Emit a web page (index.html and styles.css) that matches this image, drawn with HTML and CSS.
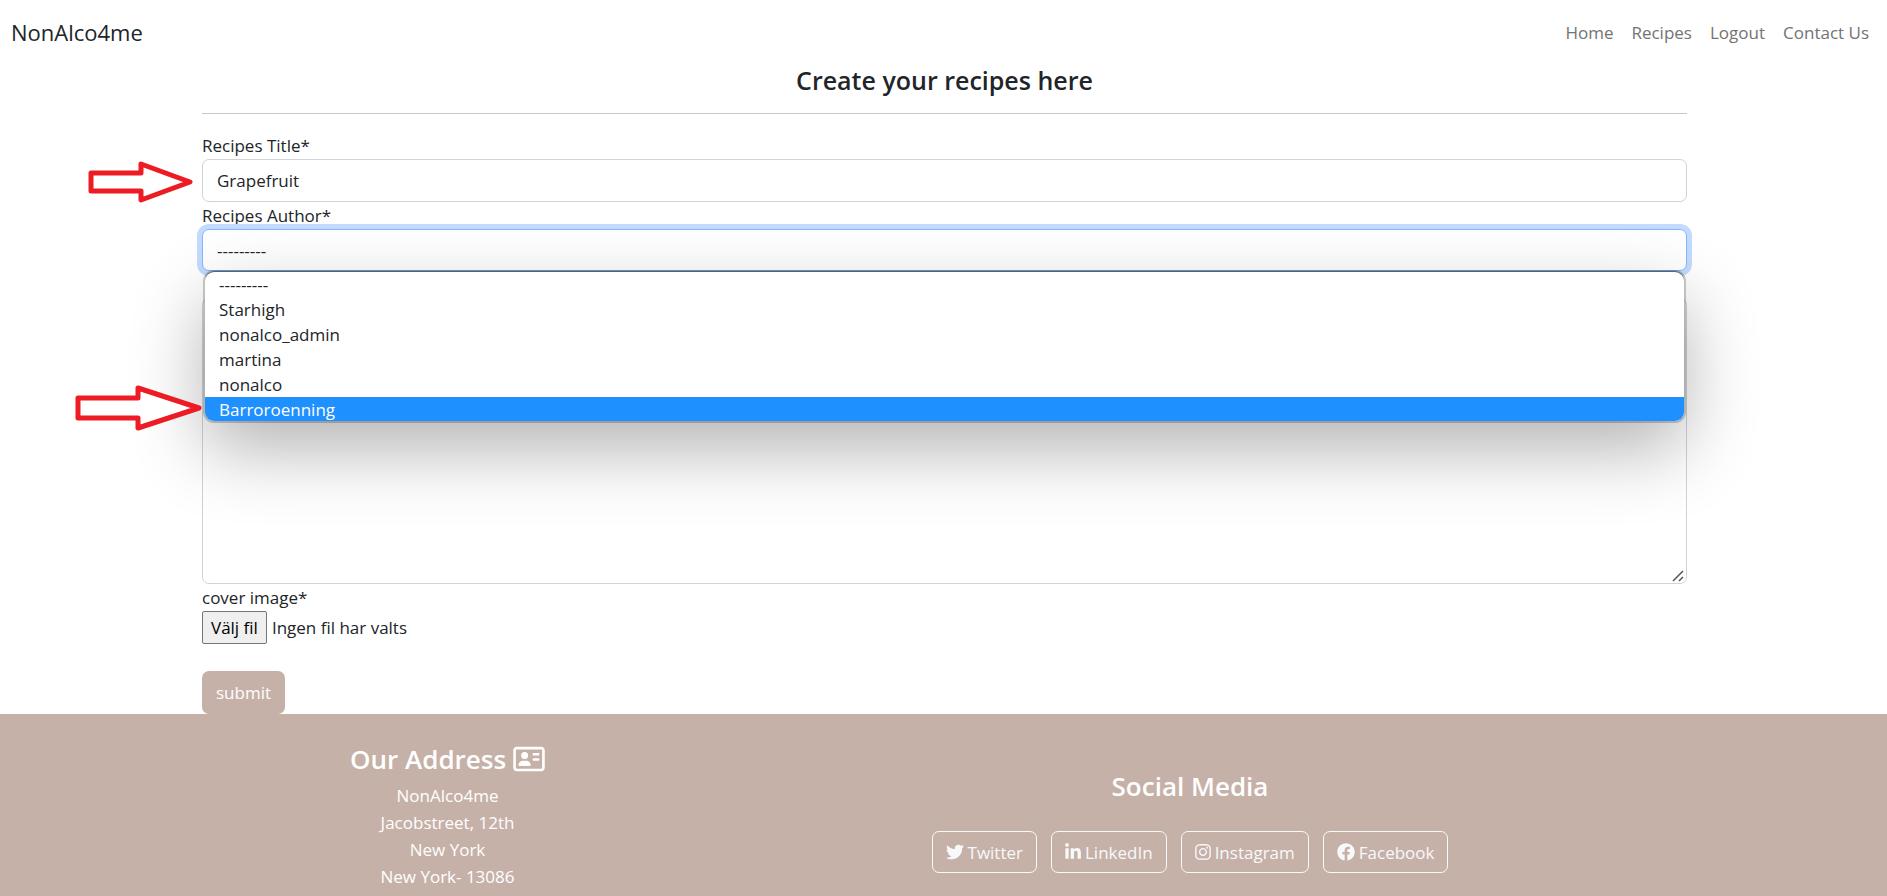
FILE: index.html
```html
<!DOCTYPE html>
<html lang="en">
<head>
<meta charset="utf-8">
<title>NonAlco4me</title>
<link rel="stylesheet" href="styles.css">
</head>
<body>
<header class="navbar">
  <a class="brand" href="#">NonAlco4me</a>
  <nav class="nav">
    <a href="#">Home</a>
    <a href="#">Recipes</a>
    <a href="#">Logout</a>
    <a href="#">Contact Us</a>
  </nav>
</header>
<main class="container">
  <h1 class="page-title">Create your recipes here</h1>
  <hr class="rule">
  <form class="form">
    <label for="title">Recipes Title*</label>
    <div class="field">
      <input class="control" id="title" type="text" value="Grapefruit">
      <svg class="arrow arrow-title" width="108" height="44" viewBox="0 0 108 44" aria-hidden="true"><path d="M3 13H53V4L102 22L53 40V31H3Z"/></svg>
    </div>
    <label for="author">Recipes Author*</label>
    <div class="field">
      <select class="control control-focus" id="author">
        <option>---------</option>
        <option>Starhigh</option>
        <option>nonalco_admin</option>
        <option>martina</option>
        <option>nonalco</option>
        <option>Barroroenning</option>
      </select>
      <ul class="menu" role="listbox" aria-label="Recipes Author">
        <li role="option">---------</li>
        <li role="option">Starhigh</li>
        <li role="option">nonalco_admin</li>
        <li role="option">martina</li>
        <li role="option">nonalco</li>
        <li role="option" class="active" aria-selected="true">Barroroenning</li>
      </ul>
      <svg class="arrow arrow-option" width="128" height="48" viewBox="0 0 128 48" aria-hidden="true"><path d="M3 14H63V4L124 24L63 44V34H3Z"/></svg>
    </div>
    <div class="field area-field">
      <textarea class="control area" aria-label="Recipe"></textarea>
      <svg class="grip" width="12" height="12" viewBox="0 0 12 12" aria-hidden="true"><path d="M1 11L11 1M7 11L11 7"/></svg>
    </div>
    <label for="cover">cover image*</label>
    <div class="file">
      <span class="file-button">Välj fil</span>
      <span>Ingen fil har valts</span>
      <input class="file-input" id="cover" type="file">
    </div>
    <button class="submit" type="submit">submit</button>
  </form>
</main>
<footer class="footer">
  <section class="address">
    <h2>Our Address
      <svg class="card-icon" viewBox="0 0 576 512" aria-hidden="true"><path d="M512 80c8.800 0 16 7.200 16 16V416c0 8.800-7.200 16-16 16H64c-8.800 0-16-7.200-16-16V96c0-8.800 7.200-16 16-16H512zM64 32C28.700 32 0 60.700 0 96V416c0 35.300 28.700 64 64 64H512c35.300 0 64-28.700 64-64V96c0-35.300-28.700-64-64-64H64zM208 256a64 64 0 1 0 0-128 64 64 0 1 0 0 128zm-32 32c-44.200 0-80 35.800-80 80c0 8.800 7.200 16 16 16H304c8.800 0 16-7.200 16-16c0-44.200-35.800-80-80-80H176zM376 144c-13.300 0-24 10.700-24 24s10.700 24 24 24h80c13.300 0 24-10.700 24-24s-10.700-24-24-24H376zm0 96c-13.300 0-24 10.700-24 24s10.700 24 24 24h80c13.300 0 24-10.700 24-24s-10.700-24-24-24H376z"/></svg>
    </h2>
    <address>NonAlco4me<br>Jacobstreet, 12th<br>New York<br>New York- 13086</address>
  </section>
  <section class="social">
    <h2>Social Media</h2>
    <div class="links">
      <a href="#"><svg viewBox="0 0 512 512" aria-hidden="true"><path d="M459.370 151.716c.325 4.548.325 9.097.325 13.645 0 138.720-105.583 298.558-298.558 298.558-59.452 0-114.680-17.219-161.137-47.106 8.447.974 16.568 1.299 25.340 1.299 49.055 0 94.213-16.568 130.274-44.832-46.132-.975-84.792-31.188-98.112-72.772 6.498.974 12.995 1.624 19.818 1.624 9.421 0 18.843-1.300 27.614-3.573-48.081-9.747-84.143-51.980-84.143-102.985v-1.299c13.969 7.797 30.214 12.670 47.431 13.319-28.264-18.843-46.781-51.005-46.781-87.391 0-19.492 5.197-37.360 14.294-52.954 51.655 63.675 129.300 105.258 216.365 109.807-1.624-7.797-2.599-15.918-2.599-24.040 0-57.828 46.782-104.934 104.934-104.934 30.213 0 57.502 12.670 76.670 33.137 23.715-4.548 46.456-13.320 66.599-25.340-7.798 24.366-24.366 44.833-46.132 57.827 21.117-2.273 41.584-8.122 60.426-16.243-14.292 20.791-32.161 39.308-52.628 54.253z"/></svg><span>Twitter</span></a>
      <a href="#"><svg class="narrow" viewBox="0 0 448 512" aria-hidden="true"><path d="M100.280 448H7.400V148.900h92.880zM53.790 108.100C24.090 108.100 0 83.500 0 53.800a53.790 53.790 0 0 1 107.580 0c0 29.700-24.100 54.300-53.790 54.300zM447.900 448h-92.680V302.400c0-34.700-.7-79.200-48.290-79.200-48.290 0-55.690 37.700-55.690 76.700V448h-92.780V148.900h89.080v40.800h1.300c12.400-23.500 42.690-48.300 87.880-48.300 94 0 111.280 61.900 111.280 142.300V448z"/></svg><span>LinkedIn</span></a>
      <a href="#"><svg class="narrow" viewBox="0 0 448 512" aria-hidden="true"><path d="M224.100 141c-63.600 0-114.900 51.300-114.900 114.900s51.300 114.900 114.900 114.900S339 319.500 339 255.900 287.700 141 224.100 141zm0 189.600c-41.100 0-74.700-33.500-74.700-74.700s33.500-74.700 74.700-74.700 74.700 33.500 74.700 74.700-33.600 74.700-74.700 74.700zm146.400-194.300c0 14.900-12 26.800-26.800 26.800-14.900 0-26.800-12-26.800-26.800s12-26.800 26.800-26.800 26.800 12 26.800 26.800zm76.100 27.200c-1.700-35.900-9.900-67.700-36.200-93.900-26.200-26.200-58-34.400-93.900-36.200-37-2.100-147.900-2.100-184.900 0-35.800 1.700-67.600 9.900-93.900 36.100s-34.400 58-36.200 93.900c-2.100 37-2.100 147.900 0 184.900 1.700 35.900 9.900 67.700 36.200 93.900s58 34.400 93.900 36.200c37 2.100 147.900 2.100 184.900 0 35.900-1.700 67.700-9.900 93.900-36.200 26.200-26.200 34.400-58 36.200-93.900 2.100-37 2.100-147.800 0-184.800zM398.800 388c-7.800 19.600-22.900 34.700-42.600 42.600-29.500 11.700-99.500 9-132.100 9s-102.700 2.600-132.100-9c-19.600-7.800-34.700-22.900-42.600-42.600-11.700-29.500-9-99.500-9-132.100s-2.600-102.700 9-132.100c7.800-19.600 22.900-34.700 42.600-42.600 29.500-11.700 99.500-9 132.100-9s102.700-2.600 132.100 9c19.600 7.800 34.700 22.900 42.600 42.600 11.700 29.500 9 99.500 9 132.100s2.700 102.700-9 132.100z"/></svg><span>Instagram</span></a>
      <a href="#"><svg viewBox="0 0 512 512" aria-hidden="true"><path d="M504 256C504 119 393 8 256 8S8 119 8 256c0 123.780 90.690 226.380 209.250 245V327.690h-63V256h63v-54.640c0-62.150 37-96.480 93.670-96.480 27.140 0 55.520 4.840 55.520 4.840v61h-31.280c-30.800 0-40.410 19.120-40.410 38.730V256h68.780l-11 71.690h-57.780V501C413.310 482.380 504 379.780 504 256z"/></svg><span>Facebook</span></a>
    </div>
  </section>
</footer>
</body>
</html>
```
FILE: styles.css
```css
* {
  box-sizing: border-box;
}

body {
  margin: 0;
  min-height: 100vh;
  display: flex;
  flex-direction: column;
  overflow: hidden;
  font-family: "Open Sans", "Noto Sans", sans-serif;
  font-size: 17px;
  line-height: 27px;
  color: #212529;
  background: #fff;
}

a {
  color: inherit;
  text-decoration: none;
}

.navbar {
  display: flex;
  justify-content: space-between;
  align-items: center;
  height: 64px;
  padding: 0 18px 0 11px;
}

.brand {
  font-size: 22px;
}

.nav {
  display: flex;
  gap: 18px;
  color: #737373;
}

.container {
  padding: 0 200px 0 202px;
}

.page-title {
  margin: 0;
  font-size: 25px;
  line-height: 32px;
  font-weight: 600;
  text-align: center;
}

.rule {
  margin: 17px 0 18px;
  border: 0;
  border-top: 1px solid #c7c8c9;
}

.form {
  display: flex;
  flex-direction: column;
}

.field {
  position: relative;
  display: flex;
}

.control {
  width: 100%;
  height: 43px;
  padding: 7px 14px;
  border: 1px solid #ced4da;
  border-radius: 7px;
  background: #fff;
  font: inherit;
  color: inherit;
  appearance: none;
}

.control-focus {
  height: 42px;
  border-color: #86b7fe;
  outline: 0;
  box-shadow: 0 0 0 5px #c2dbfe;
}

.area-field {
  margin-top: 27px;
}

.area {
  height: 286px;
  resize: none;
}

.grip {
  position: absolute;
  right: 3px;
  bottom: 2px;
  fill: none;
  stroke: #555;
  stroke-width: 1.5;
}

.menu {
  position: absolute;
  z-index: 1;
  top: 43px;
  left: 3px;
  right: 3px;
  max-height: 149px;
  margin: 0;
  padding: 0;
  overflow: hidden;
  list-style: none;
  line-height: 25px;
  background: #fff;
  border-radius: 9px;
  box-shadow: 0 0 0 2px rgba(0, 0, 0, 0.2), 0 -1px 0 rgba(0, 0, 0, 0.4), 0 28px 72px rgba(0, 0, 0, 0.3);
}

.menu li {
  padding: 0 14px;
}

.menu .active {
  color: #fff;
  background: #1e90ff;
}

.arrow {
  position: absolute;
  z-index: 2;
  fill: #fff;
  stroke: #ed1c24;
  stroke-width: 5;
  stroke-linejoin: round;
}

.arrow-title {
  left: -114px;
  top: 1px;
}

.arrow-option {
  left: -127px;
  top: 155px;
}

.file {
  position: relative;
  display: flex;
  align-items: center;
  align-self: flex-start;
  gap: 5px;
}

.file-button {
  padding: 2px 8px;
  border: 1px solid #767676;
  border-radius: 2px;
  color: #000;
  background: #efefef;
}

.file-input {
  position: absolute;
  inset: 0;
  width: 100%;
  opacity: 0;
}

.submit {
  align-self: flex-start;
  height: 43px;
  margin-top: 27px;
  padding: 0 14px;
  border: 0;
  border-radius: 7px;
  font: inherit;
  color: #fff;
  background: #c6b1a8;
}

.footer {
  flex: 1;
  display: grid;
  grid-template-columns: 1fr 2fr;
  padding: 27px 202px 0 200px;
  color: #fff;
  background: #c6b1a8;
  text-align: center;
}

.footer h2 {
  margin: 0;
  font-size: 26px;
  line-height: 36px;
  font-weight: 600;
}

.card-icon {
  width: 32px;
  height: 28px;
  vertical-align: -4px;
  fill: #fff;
}

address {
  margin-top: 5px;
  font-style: normal;
}

.social h2 {
  line-height: 90px;
}

.links {
  display: flex;
  justify-content: center;
  gap: 14px;
}

.links a {
  display: flex;
  align-items: center;
  gap: 4px;
  height: 42px;
  padding: 0 13px;
  border: 1px solid #f8f9fa;
  border-radius: 7px;
  color: #f8f9fa;
}

.links svg {
  width: 18px;
  height: 18px;
  fill: #f8f9fa;
}

.links .narrow {
  width: 16px;
}
```
